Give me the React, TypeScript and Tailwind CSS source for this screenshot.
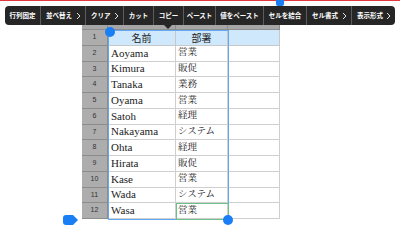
import React from "react";

const tools: { label: string; w: number; more?: boolean }[] = [
  { label: "行列固定", w: 35 },
  { label: "並べ替え", w: 45, more: true },
  { label: "クリア", w: 38, more: true },
  { label: "カット", w: 30 },
  { label: "コピー", w: 30 },
  { label: "ペースト", w: 32 },
  { label: "値をペースト", w: 48 },
  { label: "セルを結合", w: 43 },
  { label: "セル書式", w: 45, more: true },
  { label: "表示形式", w: 44, more: true },
];

const rows: [string, string][] = [
  ["Aoyama", "営業"],
  ["Kimura", "販促"],
  ["Tanaka", "業務"],
  ["Oyama", "営業"],
  ["Satoh", "経理"],
  ["Nakayama", "システム"],
  ["Ohta", "経理"],
  ["Hirata", "販促"],
  ["Kase", "営業"],
  ["Wada", "システム"],
  ["Wasa", "営業"],
];

const Chevron = () => (
  <svg width="5" height="8" viewBox="0 0 5 8" className="shrink-0">
    <path d="M1 1 L4 4 L1 7" fill="none" stroke="#e5e5e5" strokeWidth="1" />
  </svg>
);

const RowHead: React.FC<{ n: number }> = ({ n }) => (
  <div className="w-[26px] h-[15.75px] shrink-0 bg-[#adadad] border-r border-b border-[#8c8c8c] flex items-center justify-center text-[7px] text-[#333] font-['Liberation_Sans',sans-serif]">
    {n}
  </div>
);

export default function App() {
  return (
    <div className="relative w-[400px] h-[243px] bg-white overflow-hidden">
      <div className="h-px bg-[#e0393b]" />

      {/* sheet */}
      <div className="mt-[13px] ml-[82px] w-[198px] font-['Liberation_Serif','Noto_Serif_CJK_JP','Noto_Sans_CJK_JP',serif] text-[#222]">
        {/* column header strip */}
        <div className="flex h-[16px]">
          <div className="w-[26px] bg-[#a6a6a6] border-r border-b border-[#8c8c8c]" />
          <div className="w-[68px] bg-[#a6a6a6] border-r border-b border-[#8c8c8c]" />
          <div className="w-[52px] bg-[#a6a6a6] border-r border-b border-[#8c8c8c]" />
          <div className="w-[52px] bg-[#a6a6a6] border-r border-b border-[#8c8c8c]" />
        </div>
        {/* row 1 header */}
        <div className="flex">
          <RowHead n={1} />
          <div className="w-[68px] h-[15.75px] bg-[#cfe8fc] border-r border-b border-[#c8c8c8] flex items-center justify-center text-[10px] font-['Noto_Sans_CJK_JP',sans-serif]">
            名前
          </div>
          <div className="w-[52px] h-[15.75px] bg-[#cfe8fc] border-r border-b border-[#c8c8c8] flex items-center justify-center text-[10px] font-['Noto_Sans_CJK_JP',sans-serif]">
            部署
          </div>
          <div className="w-[52px] h-[15.75px] bg-[#cfe8fc] border-r border-b border-[#c8c8c8]" />
        </div>
        {rows.map(([name, dept], i) => (
          <div key={name + i} className="flex">
            <RowHead n={i + 2} />
            <div className="w-[68px] h-[15.75px] border-r border-b border-[#cfcfcf] flex items-center pl-[3px] text-[11px] leading-none">
              {name}
            </div>
            <div className="w-[52px] h-[15.75px] border-r border-b border-[#cfcfcf] flex items-center pl-[2px] text-[9.5px] leading-none">
              {dept}
            </div>
            <div className="w-[52px] h-[15.75px] border-r border-b border-[#cfcfcf]" />
          </div>
        ))}
      </div>

      {/* selection over A1:B12 */}
      <div className="absolute left-[108px] top-[30px] w-[121px] h-[190px] border border-[#62a9f2] pointer-events-none" />
      <div className="absolute left-[176px] top-[203px] w-[53px] h-[17px] border border-[#6cc08c] pointer-events-none" />
      <div className="absolute left-[105px] top-[27px] w-[10px] h-[10px] rounded-full bg-[#1a7ef5]" />
      <div className="absolute left-[223px] top-[215px] w-[10px] h-[10px] rounded-full bg-[#1a7ef5]" />
      <svg className="absolute left-[63px] top-[215px]" width="15" height="10" viewBox="0 0 15 10">
        <path d="M3 0 H10 L15 5 L10 10 H3 Q0 10 0 7 V3 Q0 0 3 0 Z" fill="#1a7ef5" />
      </svg>
      <div className="absolute left-[276px] top-0 w-[8px] h-[6px] rounded-b-[2px] bg-[#1a7ef5]" />

      {/* context toolbar */}
      <div className="absolute left-[5px] top-[6px] h-[19px] flex rounded-[4px] bg-[#262626] font-['Noto_Sans_CJK_JP',sans-serif] font-bold text-white text-[6.5px]">
        {tools.map((t, i) => (
          <div
            key={t.label}
            style={{ width: t.w }}
            className={`h-full flex items-center ${t.more ? "justify-between pl-[5px] pr-[4px]" : "justify-center"} ${i > 0 ? "border-l border-[#5c5c5c]" : ""}`}
          >
            <span className="leading-none whitespace-nowrap">{t.label}</span>
            {t.more && <Chevron />}
          </div>
        ))}
        <div className="absolute left-[159px] top-[19px] w-0 h-0 border-l-[4px] border-r-[4px] border-t-[4px] border-l-transparent border-r-transparent border-t-[#262626]" />
      </div>
    </div>
  );
}
